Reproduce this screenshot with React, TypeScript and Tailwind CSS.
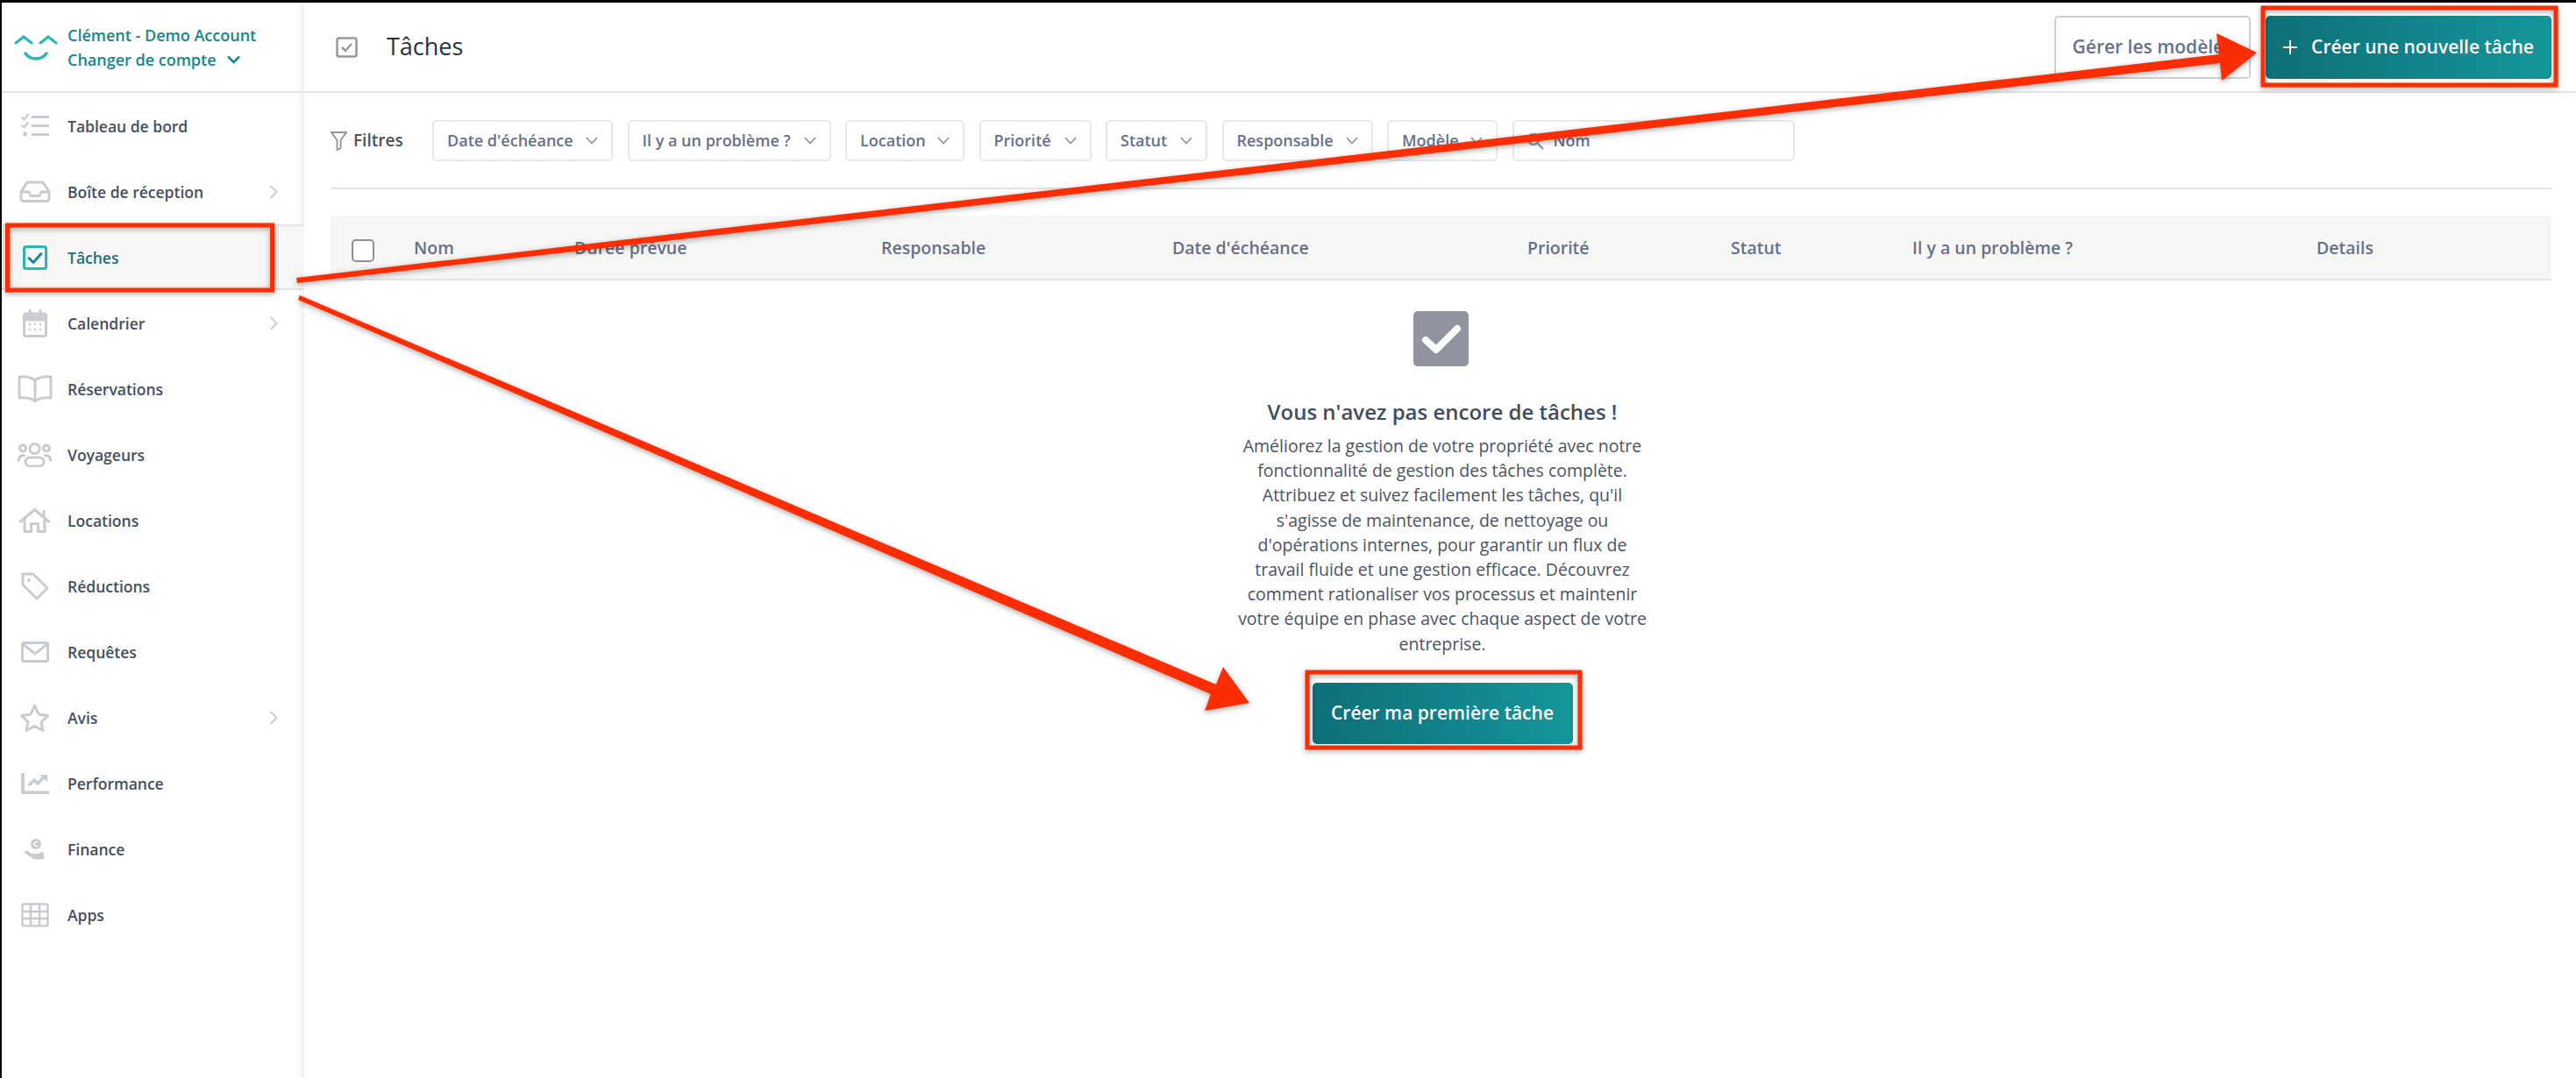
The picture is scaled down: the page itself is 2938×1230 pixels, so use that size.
import type { ReactNode } from "react";

const iconProps = {
  fill: "none",
  stroke: "#c9cbd3",
  strokeWidth: 3,
  strokeLinecap: "round" as const,
  strokeLinejoin: "round" as const,
};

function Svg({ w, h, children }: { w: number; h: number; children: ReactNode }) {
  return (
    <svg width={w} height={h} viewBox={`0 0 ${w} ${h}`} {...iconProps}>
      {children}
    </svg>
  );
}

const icons: Record<string, ReactNode> = {
  dashboard: (
    <Svg w={32} h={28}>
      <path d="M1 4l2.500 2.500L8 1M1 13l2.500 2.500L8 10" strokeWidth={2} />
      <circle cx={4.500} cy={23} r={2.500} fill="#c9cbd3" stroke="none" />
      <path d="M13 3.500h18M13 13.500h18M13 23.500h18" />
    </Svg>
  ),
  inbox: (
    <Svg w={36} h={25}>
      <path d="M9 2h18l7 11v8a2.500 2.500 0 0 1-2.500 2.500h-27A2.500 2.500 0 0 1 2 21v-8z" />
      <path d="M2 13h9l2 4.500h10l2-4.500h9" />
    </Svg>
  ),
  tasks: (
    <svg width={28} height={28} viewBox="0 0 28 28" fill="none">
      <rect x={1.500} y={1.500} width={25} height={25} rx={2} stroke="#2bb5b8" strokeWidth={3} />
      <path d="M7 14.500l5 5 9-10" stroke="#158a90" strokeWidth={3} strokeLinecap="round" strokeLinejoin="round" />
    </svg>
  ),
  calendar: (
    <Svg w={28} h={32}>
      <rect x={1.500} y={5} width={25} height={25.500} rx={2} />
      <path d="M2 8h24v4H2z" fill="#c9cbd3" />
      <path d="M8 1v5M20 1v5" />
      <path d="M7 17h2M13 17h2M19 17h2M7 23h2M13 23h2M19 23h2" strokeWidth={2.500} strokeLinecap="butt" />
    </Svg>
  ),
  book: (
    <Svg w={40} h={32}>
      <path d="M20 6C16 2.500 8 1.500 2 2v24c6-.500 14 0 18 4 4-4 12-4.500 18-4V2c-6-.500-14 .500-18 4zM20 6v24" />
    </Svg>
  ),
  users: (
    <Svg w={39} h={28}>
      <circle cx={19.500} cy={7} r={5.500} />
      <circle cx={6} cy={6.500} r={3.500} />
      <circle cx={33} cy={6.500} r={3.500} />
      <rect x={9} y={17} width={21} height={10} rx={5} />
      <path d="M1.500 20c0-3.500 2-5.500 6-5.500M37.500 20c0-3.500-2-5.500-6-5.500" />
    </Svg>
  ),
  home: (
    <Svg w={35} h={28}>
      <path d="M1.500 15L17.500 1.500 33.500 15" />
      <path d="M6 11v15.500h7.500v-9h8v9H29V11M28 3v6" />
    </Svg>
  ),
  tag: (
    <Svg w={32} h={32}>
      <path d="M2 2h12l16 16-12 12L2 14z" />
      <circle cx={9} cy={9} r={2} fill="#c9cbd3" stroke="none" />
    </Svg>
  ),
  mail: (
    <Svg w={32} h={24}>
      <rect x={1.500} y={1.500} width={29} height={21} rx={2} />
      <path d="M2 3l14 11L30 3" />
    </Svg>
  ),
  star: (
    <Svg w={33} h={32}>
      <path d="M16.500 2l4.500 10 10.500 1.500-7.500 7.500 2 9.500-9.500-5-9.500 5 2-9.500L1.500 13.500 12 12z" />
    </Svg>
  ),
  chart: (
    <Svg w={32} h={24}>
      <path d="M2 0v22.500h30" strokeWidth={4} strokeLinecap="butt" />
      <path d="M9 14l6-6 4 4 7-7" strokeWidth={3.500} strokeLinecap="butt" />
      <path d="M21 2h9v8z" fill="#c9cbd3" stroke="none" />
    </Svg>
  ),
  finance: (
    <svg width={28} height={24} viewBox="0 0 28 24">
      <circle cx={15} cy={6} r={6} fill="#c9cbd3" />
      <path d="M17 4a2.500 2.500 0 1 0 0 4M11.500 6h3" fill="none" stroke="#fff" strokeWidth={1.200} />
      <path d="M1 15l4-1.500 5 3.500h7l-4 1 9-2.500h2v8H13L6 19z" fill="#c9cbd3" />
    </svg>
  ),
  apps: (
    <Svg w={32} h={28}>
      <rect x={1.500} y={1.500} width={29} height={25} rx={2} strokeWidth={2.500} />
      <path d="M11 2v24M21 2v24M2 10h28M2 18h28" strokeWidth={2.500} strokeLinecap="butt" />
    </Svg>
  ),
};

const navItems = [
  { label: "Tableau de bord", icon: "dashboard" },
  { label: "Boîte de réception", icon: "inbox", arrow: true },
  { label: "Tâches", icon: "tasks", active: true },
  { label: "Calendrier", icon: "calendar", arrow: true },
  { label: "Réservations", icon: "book" },
  { label: "Voyageurs", icon: "users" },
  { label: "Locations", icon: "home" },
  { label: "Réductions", icon: "tag" },
  { label: "Requêtes", icon: "mail" },
  { label: "Avis", icon: "star", arrow: true },
  { label: "Performance", icon: "chart" },
  { label: "Finance", icon: "finance" },
  { label: "Apps", icon: "apps" },
];

const filters = [
  { label: "Date d'échéance", width: "w-[206px]" },
  { label: "Il y a un problème ?", width: "w-[232px]" },
  { label: "Location", width: "w-[136px]" },
  { label: "Priorité", width: "w-[128px]" },
  { label: "Statut", width: "w-[116px]" },
  { label: "Responsable", width: "w-[172px]" },
  { label: "Modèle", width: "w-[126px]" },
];

const columns = [
  { label: "Nom", width: "w-[183px]" },
  { label: "Durée prévue", width: "w-[350px]" },
  { label: "Responsable", width: "w-[332px]" },
  { label: "Date d'échéance", width: "w-[405px]" },
  { label: "Priorité", width: "w-[232px]" },
  { label: "Statut", width: "w-[207px]" },
  { label: "Il y a un problème ?", width: "w-[461px]" },
  { label: "Details", width: "w-[100px]" },
];

function Chevron({ className }: { className: string }) {
  return (
    <svg className={className} width="14" height="9" viewBox="0 0 14 9" fill="none" stroke="currentColor" strokeWidth="1.800">
      <path d="M1 1l6 6.500L13 1" />
    </svg>
  );
}

function Sidebar() {
  return (
    <aside className="flex h-full w-[345px] shrink-0 flex-col bg-white shadow-[inset_-12px_0_10px_-10px_rgba(0,0,0,0.09)]">
      <div className="flex h-[103px] shrink-0 items-center border-b-2 border-[#e4e4e4] pl-[14px]">
        <svg width="50" height="36" viewBox="0 0 50 36" fill="none" stroke="#2bb5b8" strokeWidth="3.500" strokeLinecap="round">
          <path d="M2 13L11 6l9 7M30 13l9-7 9 7" strokeWidth="3" />
          <path d="M13 25c6 8 18 8 24 0" />
        </svg>
        <div className="ml-[11px] text-[18px] font-semibold leading-[28px] text-[#17868c]">
          <div>Clément - Demo Account</div>
          <div className="flex items-center">
            Changer de compte
            <svg className="ml-[12px]" width="15" height="10" viewBox="0 0 15 10" fill="none" stroke="#17868c" strokeWidth="2.500">
              <path d="M1 1.500l6.500 6.500L14 1.500" />
            </svg>
          </div>
        </div>
      </div>
      {navItems.map((item) => (
        <div
          key={item.label}
          className={`flex h-[75px] shrink-0 items-center pr-[30px] text-[17.500px] font-semibold ${
            item.active ? "border-y-2 border-[#e4e4e4] bg-[#f6f6f5] text-[#1a6f78]" : "text-[#454f60]"
          }`}
        >
          <div className="flex w-[75px] shrink-0 items-center justify-center">{icons[item.icon]}</div>
          <span className="flex-1 pt-[2px]">{item.label}</span>
          {item.arrow && (
            <svg width="10" height="16" viewBox="0 0 10 16" fill="none" stroke="#c9cbd3" strokeWidth="2">
              <path d="M1.500 1l7 7-7 7" />
            </svg>
          )}
        </div>
      ))}
    </aside>
  );
}

function Annotations() {
  return (
    <svg
      className="pointer-events-none absolute left-[-2px] top-[-3px]"
      width="2938"
      height="1230"
      viewBox="0 0 2938 1230"
      style={{ filter: "drop-shadow(0 2px 3px rgba(0,0,0,0.35))" }}
    >
      <g fill="none" stroke="#fc2c03" strokeWidth="5">
        <rect x="8.500" y="257" width="302" height="74" />
        <rect x="2581" y="9" width="334" height="88" />
        <rect x="1491" y="767" width="311" height="86" />
      </g>
      <g fill="#fc2c03">
        <path d="M338 317L2531 62 2528 38 2574 60 2534 92 2532 72 339 323z" />
        <path d="M342 337L1387 781 1395 761 1425 802 1374 811 1381 792 340 342z" />
      </g>
    </svg>
  );
}

export default function App() {
  return (
    <div className="relative flex h-[1230px] w-[2938px] overflow-hidden border-l-2 border-t-[3px] border-black bg-white font-['Open_Sans',sans-serif]">
      <Sidebar />
      <main className="flex min-w-0 flex-1 flex-col">
        <header className="flex h-[103px] shrink-0 items-center border-b-2 border-[#e4e4e4] pl-[36px] pr-[28px]">
          <svg width="25" height="24" viewBox="0 0 25 24" fill="none">
            <rect x="1.500" y="1.500" width="22" height="21" rx="2" stroke="#96989f" strokeWidth="2.500" />
            <path d="M7 12l4 4 7-8" stroke="#96989f" strokeWidth="2.500" />
          </svg>
          <h1 className="ml-[33px] flex-1 text-[27px] font-normal text-[#2c3038]">Tâches</h1>
          <button className="mr-[17px] h-[72px] w-[224px] overflow-hidden whitespace-nowrap rounded-[5px] border-2 border-[#cfcfcf] bg-white text-[21px] font-semibold text-[#67708a]">
            Gérer les modèles
          </button>
          <button className="flex h-[72px] w-[326px] items-center justify-center gap-[16px] rounded-[5px] bg-gradient-to-r from-[#0f6f78] to-[#14969b] text-[21px] font-semibold text-white">
            <svg width="16" height="16" viewBox="0 0 16 16" stroke="#fff" strokeWidth="2">
              <path d="M8 0v16M0 8h16" />
            </svg>
            Créer une nouvelle tâche
          </button>
        </header>

        <div className="pl-[30px] pr-[28px]">
          <div className="flex h-[110px] items-start border-b-2 border-[#e4e4e4] pt-[31px]">
            <div className="flex h-[47px] w-[116px] shrink-0 items-center gap-[7px] text-[19px] font-semibold text-[#4a5364]">
              <svg width="19" height="24" viewBox="0 0 19 24" fill="none" stroke="#8d929c" strokeWidth="1.800">
                <path d="M1 2h17l-6.500 9v9l-4 2V11z" />
              </svg>
              Filtres
            </div>
            <div className="flex gap-[16.500px]">
              {filters.map((f) => (
                <div
                  key={f.label}
                  className={`flex h-[47px] shrink-0 items-center justify-between rounded-[5px] border-2 border-[#e8e8e8] px-[15px] text-[18px] font-semibold text-[#67708a] ${f.width}`}
                >
                  <span className="whitespace-nowrap">{f.label}</span>
                  <Chevron className="shrink-0 text-[#8f95a5]" />
                </div>
              ))}
              <div className="flex h-[47px] w-[322px] shrink-0 items-center gap-[11px] rounded-[5px] border-2 border-[#e8e8e8] px-[14px] text-[18px] font-semibold text-[#67708a]">
                <svg width="20" height="20" viewBox="0 0 20 20" fill="none" stroke="#9a9ea8" strokeWidth="2.500">
                  <circle cx="8" cy="8" r="6" />
                  <path d="M13 13l6 6" />
                </svg>
                Nom
              </div>
            </div>
          </div>

          <div className="mt-[30px] flex h-[74px] items-center border-b-2 border-[#e4e4e4] bg-[#f6f6f5]">
            <div className="ml-[24px] mr-[45px] h-[26px] w-[26px] shrink-0 translate-y-[4px] rounded-[5px] border-2 border-[#8f8f94] bg-white" />
            {columns.map((c) => (
              <div key={c.label} className={`shrink-0 whitespace-nowrap pt-[2px] text-[19.500px] font-semibold text-[#67708a] ${c.width}`}>
                {c.label}
              </div>
            ))}
          </div>

          <div className="flex flex-col items-center pl-[3px] pt-[35px]">
            <div className="mr-[3px] flex h-[63px] w-[63px] items-center justify-center rounded-[5px] bg-[#9094a1]">
              <svg width="46" height="36" viewBox="0 0 46 36" fill="none" stroke="#fff" strokeWidth="8" strokeLinecap="round" strokeLinejoin="round">
                <path d="M5 19l12 11L41 6" />
              </svg>
            </div>
            <h2 className="mt-[36px] text-[24px] font-semibold leading-[32px] text-[#424c5d]">Vous n'avez pas encore de tâches !</h2>
            <p className="mt-[9px] w-[472px] text-center text-[19.500px] leading-[28.200px] text-[#4a5364]">
              Améliorez la gestion de votre propriété avec notre fonctionnalité de gestion des tâches complète. Attribuez et suivez facilement les tâches, qu'il s'agisse de maintenance, de nettoyage ou d'opérations internes, pour garantir un flux de travail fluide et une gestion efficace. Découvrez comment rationaliser vos processus et maintenir votre équipe en phase avec chaque aspect de votre entreprise.
            </p>
            <button className="mt-[30px] h-[70px] w-[297px] rounded-[5px] bg-gradient-to-r from-[#0f6f78] to-[#14969b] text-[21px] font-semibold text-white">
              Créer ma première tâche
            </button>
          </div>
        </div>
      </main>
      <Annotations />
    </div>
  );
}
